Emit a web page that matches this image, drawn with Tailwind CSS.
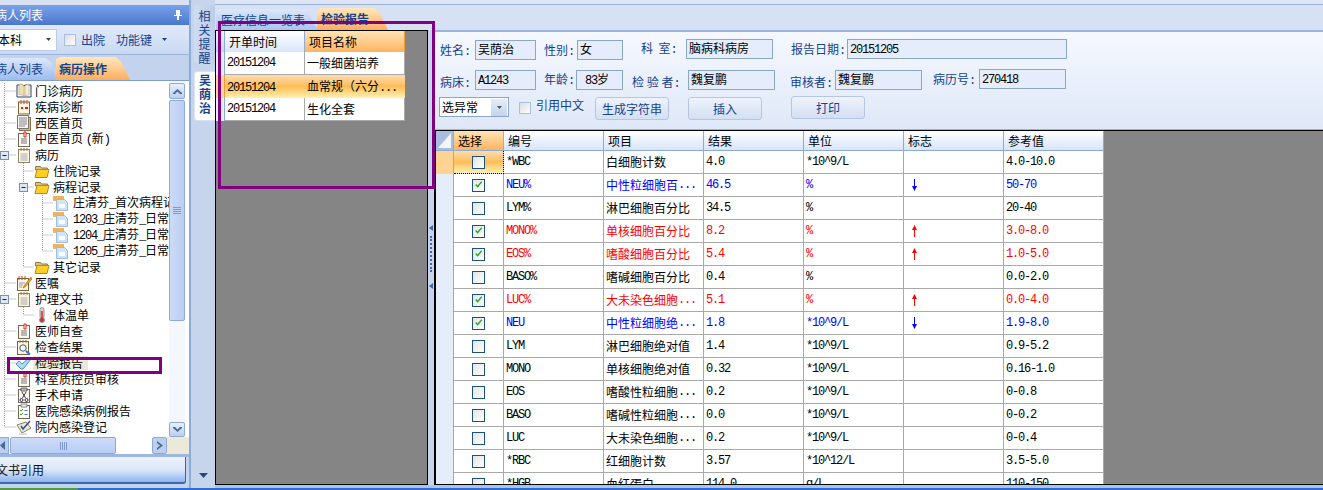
<!DOCTYPE html>
<html lang="zh-CN">
  <head>
    <meta charset="UTF-8" />
    <title>检验报告</title>
    <script src="https://cdn.jsdelivr.net/npm/@tailwindcss/browser@4"></script>
  </head>
  <body class="relative w-[1323px] h-[490px] overflow-hidden bg-[#c3d3ee] text-[12px] leading-[14px] text-black font-['Noto_Sans_CJK_SC',sans-serif]">
    <!-- shared icons -->
    <svg class="hidden">
      <symbol id="i-book" viewBox="0 0 16 16"><path d="M1 2h6l1 1 1-1h6v12H1z" fill="#fff" stroke="#27406f"/><path d="M3 1c3 0 4 1 5 2v10c-1-1-3-1.500-5-1.500z" fill="#efe1b4" stroke="#b79c62" stroke-width=".6"/><path d="M9 3c1-1 3-2 4-2v11c-2 0-3 .5-4 1z" fill="#f6f0d8" stroke="#b79c62" stroke-width=".6"/></symbol>
      <symbol id="i-cal" viewBox="0 0 16 16"><rect x="2.500" y="3" width="11" height="12" fill="#fbf6e6" stroke="#7a6235"/><path d="M5 1v4M8 1v4M11 1v4" stroke="#c2412c"/><path d="M5 9h2M9 9h3" stroke="#e11" stroke-width="2"/></symbol>
      <symbol id="i-doc" viewBox="0 0 16 16"><rect x="3.500" y="2.500" width="11" height="13" fill="#e4b95e" stroke="#8d7038"/><rect x="1.500" y="0.500" width="11" height="13" fill="#f3f3f3" stroke="#777"/><path d="M3 3h8M3 5h8M3 7h8M3 9h8M3 11h6" stroke="#888"/></symbol>
      <symbol id="i-clip" viewBox="0 0 16 16"><rect x="2.500" y="2.500" width="11" height="13" fill="#fdfbf2" stroke="#6f6a55"/><path d="M5 8h6M5 10h6M5 12h6" stroke="#777"/><path d="M8 1v5h2V1z" fill="#fff" stroke="#d22"/></symbol>
      <symbol id="i-note" viewBox="0 0 16 16"><rect x="2.500" y="2.500" width="11" height="13" fill="#fbf6e6" stroke="#8e8468"/><path d="M5 1v3M8 1v3M11 1v3" stroke="#a0763a"/><path d="M4.500 7h7M4.500 9h7M4.500 11h7M4.500 13h7" stroke="#aaa"/></symbol>
      <symbol id="i-folder" viewBox="0 0 16 16"><path d="M1.500 3.500h5l1 1.500h6v2h-12z" fill="#d9c48b" stroke="#8e7a45"/><path d="M1 14.500l2-8h12l-2 8z" fill="#ffcf26" stroke="#b08a1d"/></symbol>
      <symbol id="i-file" viewBox="0 0 16 16"><rect x="0" y="1" width="11" height="5" fill="#eeb35c"/><path d="M3.500 4.500h8l3 3v8h-11z" fill="#cfe4f7" stroke="#9dbbd6"/><path d="M6 9h6v4H6z" fill="#f5fbff"/></symbol>
      <symbol id="i-pen" viewBox="0 0 16 16"><rect x="1.500" y="3.500" width="11" height="12" fill="#fbf6e6" stroke="#7a6235"/><path d="M3 1v4M6 1v4M9 1v4" stroke="#b8452a"/><path d="M3 8h6M3 10h4M3 12h3" stroke="#999"/><path d="M15 2L8 11l-1 2 2-1 7-8z" fill="#f2a81d" stroke="#a2551a" stroke-width=".6"/></symbol>
      <symbol id="i-thermo" viewBox="0 0 16 16"><rect x="6" y="0.500" width="4" height="11" rx="2" fill="#f0c8c0" stroke="#8b99a8"/><circle cx="8" cy="13" r="2.500" fill="#c33" stroke="#8b99a8"/><path d="M8 4v8" stroke="#c33" stroke-width="1.500"/></symbol>
      <symbol id="i-lens" viewBox="0 0 16 16"><rect x="1.500" y="2.500" width="11" height="13" fill="#fbf6e6" stroke="#7a6235"/><path d="M4 1v3M7 1v3M10 1v3" stroke="#a0763a"/><circle cx="7" cy="9" r="3.200" fill="#dff" stroke="#556"/><path d="M10 12l4 3.500" stroke="#2b76c9" stroke-width="2"/></symbol>
      <symbol id="i-tick" viewBox="0 0 16 16"><path d="M0 9l3-3 3 3 8-7 2 1-9 11H5z" fill="#a9dcf5" stroke="#2f78b5" stroke-width=".8"/></symbol>
      <symbol id="i-sciss" viewBox="0 0 16 16"><rect x="2.500" y="2.500" width="11" height="13" fill="#fdfbf2" stroke="#6f6a55"/><path d="M5 1h6v3H5z" fill="#bbb" stroke="#666"/><path d="M6 5l3.500 6M10 5l-3.500 6" stroke="#444"/><circle cx="5.500" cy="13" r="1.500" fill="none" stroke="#23235a"/><circle cx="10.500" cy="13" r="1.500" fill="none" stroke="#23235a"/></symbol>
      <symbol id="i-list" viewBox="0 0 16 16"><rect x="2.500" y="2.500" width="11" height="13" fill="#fdfbf2" stroke="#6f6a55"/><path d="M5 1h6v3H5z" fill="#eee" stroke="#888"/><path d="M4 7l1 1 2-2M4 11l1 1 2-2" fill="none" stroke="#2a9a3c"/><path d="M8.500 7.500h3M8.500 11.500h3" stroke="#4a7ec2"/></symbol>
      <symbol id="i-reg" viewBox="0 0 16 16"><path d="M1 6l9-3 5 6-9 5z" fill="#efe8cf" stroke="#8b8157"/><path d="M3 14h8v2H3z" fill="#ddd"/><path d="M5 7l2 3 7-8" fill="none" stroke="#2450ab" stroke-width="1.500"/></symbol>
      <symbol id="i-check" viewBox="0 0 12 12"><path d="M2.500 6l2.500 3 5-6-1-1-4 4.500-1.500-1.500z" fill="#21a52e"/></symbol>
    </svg>

    <div class="flex h-[488px]">
      <!-- left panel -->
      <aside class="w-[191px] shrink-0 flex flex-col bg-[#c3d3ee] border-r-2 border-[#8eaad6]">
        <div class="h-[5px] bg-[#d8e2f2]"></div>
        <div class="h-[20px] flex items-center justify-between pr-[7px] bg-gradient-to-b from-[#7aa2ec] to-[#4a78cd] text-white overflow-hidden">
          <span class="ml-[-5px] whitespace-nowrap">病人列表</span>
          <svg width="8" height="10" viewBox="0 0 8 10"><path d="M2 0h4v5h2v1H5v4H3V6H0V5h2z" fill="#fff"/></svg>
        </div>
        <div class="h-[30px] flex items-center bg-gradient-to-b from-[#e1eafa] to-[#c9d9f2] border-b border-[#9db4d8] text-[#15428b]">
          <div class="w-[57px] h-[22px] bg-white border-y border-r border-[#b9cbe6] flex items-center justify-between pr-[5px] text-black overflow-hidden">
            <span class="ml-[-2px]">本科</span>
            <svg width="5" height="3"><path d="M0 0h5L2.500 3z" fill="#444"/></svg>
          </div>
          <span class="ml-[7px] w-[12px] h-[12px] border border-[#a9bfe0] bg-gradient-to-br from-[#ddd] to-white"></span>
          <span class="ml-[5px]">出院</span>
          <span class="ml-[11px]">功能键</span>
          <svg class="ml-[10px]" width="5" height="3"><path d="M0 0h5L2.500 3z" fill="#15428b"/></svg>
        </div>
        <div class="h-[26px] flex items-end border-b border-[#7f9dcc]">
          <div class="w-[57px] h-[22px] flex items-center overflow-hidden bg-gradient-to-b from-[#dce7fa] to-[#9dbcef] text-[#15428b] [clip-path:polygon(0_0,80%_0,90%_20%,100%_100%,0_100%)]">
            <span class="ml-[-5px] whitespace-nowrap">病人列表</span>
          </div>
          <div class="w-[74px] h-[23px] ml-[-1px] flex items-center pl-[3px] bg-gradient-to-b from-[#ffe7bd] to-[#ffad5c] font-bold text-[#15428b] [clip-path:polygon(0_10%,5%_0,80%_0,88%_20%,100%_100%,0_100%)]">病历操作</div>
        </div>
        <div class="flex h-[356px] bg-white">
          <div id="tree" class="w-[169px] overflow-hidden pt-[2px] whitespace-nowrap"></div>
          <div class="w-[16px] flex flex-col bg-[#f4f7fd]">
            <div class="h-[16px] mt-[2px] flex items-center justify-center bg-gradient-to-b from-[#e8effc] to-[#bccff0] border border-[#8eaad6] rounded-[2px]"><svg width="9" height="5"><path d="M0 4l4.500-4L9 4 9 5H7L4.500 2.500 2 5H0z" fill="#4b6a9c"/></svg></div>
            <div class="h-[221px] mt-[1px] flex flex-col items-center justify-center gap-px bg-gradient-to-r from-[#cddbf8] to-[#b9cdf6] border border-[#8eaad6] rounded-[2px]">
              <i class="block w-[8px] h-px bg-[#7e9ad0]"></i><i class="block w-[8px] h-px bg-[#7e9ad0]"></i><i class="block w-[8px] h-px bg-[#7e9ad0]"></i><i class="block w-[8px] h-px bg-[#7e9ad0]"></i>
            </div>
            <div class="flex-1"></div>
            <div class="h-[15px] flex items-center justify-center bg-gradient-to-b from-[#e8effc] to-[#bccff0] border border-[#8eaad6] rounded-[2px]"><svg width="9" height="5"><path d="M0 1l4.500 4L9 1 9 0H7L4.500 2.500 2 0H0z" fill="#4b6a9c"/></svg></div>
          </div>
        </div>
        <div class="h-[17px] flex bg-white">
          <div class="w-[9px] flex items-center bg-[#bccff0] border-y border-r border-[#8eaad6]"><svg width="5" height="9"><path d="M5 0L0 4.500 5 9z" fill="#4b6a9c"/></svg></div>
          <div class="w-[106px] ml-px flex items-center justify-center gap-px bg-gradient-to-b from-[#cddbf8] to-[#b9cdf6] border border-[#8eaad6] rounded-[2px]">
            <i class="block w-px h-[8px] bg-[#7e9ad0]"></i><i class="block w-px h-[8px] bg-[#7e9ad0]"></i><i class="block w-px h-[8px] bg-[#7e9ad0]"></i><i class="block w-px h-[8px] bg-[#7e9ad0]"></i>
          </div>
          <div class="w-[36px]"></div>
          <div class="w-[15px] flex items-center justify-center bg-[#bccff0] border border-[#8eaad6] rounded-[2px]"><svg width="6" height="9"><path d="M0 0l6 4.500L0 9V7l3-2.500L0 2z" fill="#4b6a9c"/></svg></div>
          <div class="flex-1 bg-[#ece9d8]"></div>
        </div>
        <div class="h-[3px] bg-[#9db7e0]"></div>
        <div class="h-[27px] w-[186px] flex items-center overflow-hidden rounded-br-[3px] border-r border-b-2 border-[#3b66ad] bg-gradient-to-b from-[#eef3fc] via-[#dbe7f9] to-[#8eb4ee]">
          <span class="ml-[-4px] whitespace-nowrap text-[#111]">文书引用</span>
        </div>
      </aside>

      <!-- vertical tabs -->
      <div class="w-[24px] shrink-0 flex flex-col items-end pt-[5px] bg-[#c6d5ec] text-[#15428b]">
        <div class="w-[21px] h-[58px] pt-[4px] flex flex-col items-center rounded-l-[3px] bg-gradient-to-r from-[#cfdcf2] to-[#bccdea]">
          <span>相</span><span>关</span><span>提</span><span>醒</span>
        </div>
        <div class="w-[21px] h-[50px] mt-[8px] pt-[1px] flex flex-col items-center rounded-l-[3px] border-y border-l border-[#d8e2f2] bg-white font-bold">
          <span>吴</span><span>荫</span><span>治</span>
        </div>
        <div class="flex-1 w-full flex items-end justify-center pb-[10px]">
          <svg width="9" height="5"><path d="M0 0h9L4.500 5z" fill="#2c4a78"/></svg>
        </div>
      </div>

      <!-- right side -->
      <div class="flex-1 flex flex-col min-w-0 h-[488px] bg-[#dde5f4]">
        <div class="h-[26px] flex items-end pl-px pt-[4px] bg-[#d6e1f4] border-t border-[#9db4d8] mt-[4px]">
          <div class="w-[102px] h-[21px] pl-[5px] flex items-center overflow-hidden bg-gradient-to-b from-[#dce7fa] to-[#a8c4f0] text-[#15428b] [clip-path:polygon(0_10%,4%_0,88%_0,100%_100%,0_100%)]">医疗信息一览表</div>
          <div class="w-[71px] h-[22px] ml-[-1px] pl-[4px] flex items-center bg-gradient-to-b from-[#ffe7bd] to-[#ffad5c] font-bold text-[#15428b] [clip-path:polygon(0_10%,5%_0,80%_0,88%_20%,100%_100%,0_100%)]">检验报告</div>
        </div>
        <div class="flex-1 flex min-h-0">
          <!-- order list -->
          <div class="w-[213px] shrink-0 bg-[#868586] border border-black self-stretch overflow-hidden">
            <div class="flex h-[21px]">
              <div class="w-[9px] bg-gradient-to-b from-[#eef3fc] to-[#c3d3ee] border-r border-[#8eaad6]"></div>
              <div class="w-[80px] flex items-center pl-[4px] bg-gradient-to-b from-white to-[#d8e5fa] border-r border-[#8eaad6]">开单时间</div>
              <div class="w-[100px] flex items-center pl-[4px] bg-gradient-to-b from-[#ffe3b4] to-[#fdb45f] border-r border-[#f59c3b]">项目名称</div>
            </div>
            <div class="flex h-[23px]">
              <div class="w-[9px] bg-[#e6edfa] border-r border-[#8eaad6]"></div>
              <div class="w-[80px] flex items-center pl-[2px] bg-white border-r border-b border-[#a9a9a9]">20151204</div>
              <div class="w-[100px] flex items-center pl-[2px] bg-white border-r border-b border-[#a9a9a9]">一般细菌培养</div>
            </div>
            <div class="flex h-[23px]">
              <div class="w-[9px] bg-[#ffd391] border-r border-[#f59c3b]"></div>
              <div class="w-[180px] flex items-center pl-[2px] bg-gradient-to-b from-[#fddcae] via-[#fdbd55] to-[#fff2b0]"><span class="w-[79px]">20151204</span><span class="ml-px">血常规（六分...</span></div>
            </div>
            <div class="flex h-[23px]">
              <div class="w-[9px] bg-[#e6edfa] border-r border-[#8eaad6]"></div>
              <div class="w-[80px] flex items-center pl-[2px] bg-white border-r border-b border-[#a9a9a9]">20151204</div>
              <div class="w-[100px] flex items-center pl-[2px] bg-white border-r border-b border-[#a9a9a9]">生化全套</div>
            </div>
          </div>

          <!-- splitter -->
          <div class="w-[7px] shrink-0 flex flex-col items-center pt-[195px] bg-[#c6d5ec] border-r border-black">
            <svg width="4" height="6"><path d="M4 0L0 3l4 3z" fill="#3f66a8"/></svg>
            <div class="mt-[5px] h-[36px] w-[2px] border-l-2 border-dotted border-[#3f66a8]"></div>
            <svg class="mt-[11px]" width="4" height="6"><path d="M4 0L0 3l4 3z" fill="#3f66a8"/></svg>
          </div>

          <!-- report -->
          <div class="flex-1 min-w-0 flex flex-col">
            <form class="h-[100px] shrink-0 pl-[5px] border-t-2 border-b border-[#9db4d8] bg-gradient-to-b from-[#f5f8fe] to-[#dfe8f8] text-[#15428b]">
              <div class="flex items-start h-[32px] pt-[8px]">
                <span class="mt-[3px] w-[35px]">姓名:</span>
                <span class="w-[61px] h-[20px] pl-[2px] pt-px border border-[#8ba6c8] bg-[#e5edfc] text-black">吴荫治</span>
                <span class="mt-[3px] ml-[8px] w-[33px]">性别:</span>
                <span class="w-[46px] h-[20px] pl-[2px] pt-px border border-[#8ba6c8] bg-[#e5edfc] text-black">女</span>
                <span class="mt-[1px] ml-[18px] w-[45px] whitespace-pre">科  室:</span>
                <span class="w-[87px] h-[20px] pl-[2px] pt-px mt-[-1px] border border-[#8ba6c8] bg-[#e5edfc] text-black">脑病科病房</span>
                <span class="mt-[2px] ml-[18px] w-[56px]">报告日期:</span>
                <span class="w-[220px] h-[20px] pl-[2px] pt-px mt-[-1px] border border-[#8ba6c8] bg-[#e5edfc] text-black">20151205</span>
              </div>
              <div class="flex items-start h-[32px] pt-[6px]">
                <span class="mt-[5px] w-[35px]">病床:</span>
                <span class="w-[61px] h-[20px] pl-[2px] pt-px border border-[#8ba6c8] bg-[#e5edfc] text-black">A1243</span>
                <span class="mt-[2px] ml-[8px] w-[32px]">年龄:</span>
                <span class="w-[47px] h-[20px] pl-[8px] pt-px border border-[#8ba6c8] bg-[#e5edfc] text-black">83岁</span>
                <span class="mt-[5px] ml-[9px] w-[56px] whitespace-pre">检 验 者:</span>
                <span class="w-[87px] h-[20px] pl-[2px] pt-px border border-[#8ba6c8] bg-[#e5edfc] text-black">魏复鹏</span>
                <span class="mt-[5px] ml-[15px] w-[45px]">审核者:</span>
                <span class="w-[87px] h-[20px] pl-[2px] pt-px border border-[#8ba6c8] bg-[#e5edfc] text-black">魏复鹏</span>
                <span class="mt-[2px] ml-[11px] w-[46px]">病历号:</span>
                <span class="w-[87px] h-[20px] pl-[2px] pt-px mt-[-1px] border border-[#8ba6c8] bg-[#e5edfc] text-black">270418</span>
              </div>
              <div class="flex items-start pt-[1px]">
                <div class="w-[70px] h-[20px] ml-[-1px] flex items-center justify-between border border-[#8ba6c8] bg-white text-black">
                  <span class="pl-[2px]">选异常</span>
                  <span class="w-[16px] h-[17px] mr-px flex items-center justify-center bg-gradient-to-b from-[#e5edfc] to-[#c3d3ee]"><svg width="5" height="3"><path d="M0 0h5L2.500 3z" fill="#555"/></svg></span>
                </div>
                <span class="ml-[10px] mt-[5px] w-[12px] h-[12px] border border-[#a9bfe0] bg-gradient-to-br from-[#ddd] to-white"></span>
                <span class="ml-[5px] mt-[1px] w-[59px]">引用中文</span>
                <span class="w-[74px] h-[23px] flex items-center justify-center rounded-[3px] border border-[#b4c6e2] bg-gradient-to-b from-[#eef3fc] to-[#d3dff3]">生成字符串</span>
                <span class="ml-[19px] w-[74px] h-[23px] flex items-center justify-center rounded-[3px] border border-[#b4c6e2] bg-gradient-to-b from-[#eef3fc] to-[#d3dff3]">插入</span>
                <span class="ml-[29px] mt-[-1px] w-[74px] h-[23px] flex items-center justify-center rounded-[3px] border border-[#b4c6e2] bg-gradient-to-b from-[#eef3fc] to-[#d3dff3]">打印</span>
              </div>
            </form>
            <div class="flex-1 min-h-0 bg-[#868586] border-t border-black border-l border-b overflow-hidden">
              <div class="flex h-[20px] w-[668px] border-b border-[#8eaad6]">
                <div class="w-[18px] flex items-end bg-[#a9bddf] border-r border-[#8eaad6] p-[2px]"><svg width="13" height="15"><path d="M13 0v15H0z" fill="#f2f5fb"/></svg></div>
                <div class="w-[50px] flex items-center pl-[4px] bg-gradient-to-b from-[#ffe3b4] to-[#fdb45f] border-r border-[#f59c3b]">选择</div>
                <div class="w-[100px] flex items-center pl-[4px] bg-gradient-to-b from-white to-[#d8e5fa] border-r border-[#8eaad6]">编号</div>
                <div class="w-[100px] flex items-center pl-[4px] bg-gradient-to-b from-white to-[#d8e5fa] border-r border-[#8eaad6]">项目</div>
                <div class="w-[100px] flex items-center pl-[4px] bg-gradient-to-b from-white to-[#d8e5fa] border-r border-[#8eaad6]">结果</div>
                <div class="w-[100px] flex items-center pl-[4px] bg-gradient-to-b from-white to-[#d8e5fa] border-r border-[#8eaad6]">单位</div>
                <div class="w-[100px] flex items-center pl-[4px] bg-gradient-to-b from-white to-[#d8e5fa] border-r border-[#8eaad6]">标志</div>
                <div class="w-[100px] flex items-center pl-[4px] bg-gradient-to-b from-white to-[#d8e5fa] border-r border-[#8eaad6]">参考值</div>
              </div>
              <div id="rows"></div>
            </div>
          </div>
        </div>
        <div class="h-[3px] shrink-0 bg-[#a9c4ee]"></div>
      </div>
    </div>
    <div class="flex h-[2px]">
      <div class="w-[78px] bg-[#4aa03c]"></div>
      <div class="flex-1 bg-[#2a6fd6]"></div>
    </div>

    <!-- purple annotation boxes drawn over the screenshot -->
    <div class="absolute left-[218px] top-[21px] w-[217px] h-[168px] border-[3px] border-[#800080]"></div>
    <div class="absolute left-[7px] top-[357px] w-[155px] h-[17px] border-[3px] border-[#800080]"></div>

    <script>
      // [level, icon, text, expand box, selected]
      const tree = [
        [0, "i-book", "门诊病历"],
        [0, "i-cal", "疾病诊断"],
        [0, "i-doc", "西医首页"],
        [0, "i-clip", "中医首页 (新)"],
        [0, "i-note", "病历", true],
        [1, "i-folder", "住院记录"],
        [1, "i-folder", "病程记录", true],
        [2, "i-file", "庄清芬_首次病程记录"],
        [2, "i-file", "1203_庄清芬_日常病程"],
        [2, "i-file", "1204_庄清芬_日常病程"],
        [2, "i-file", "1205_庄清芬_日常病程"],
        [1, "i-folder", "其它记录"],
        [0, "i-pen", "医嘱"],
        [0, "i-note", "护理文书", true],
        [1, "i-thermo", "体温单"],
        [0, "i-clip", "医师自查"],
        [0, "i-lens", "检查结果"],
        [0, "i-tick", "检验报告", false, true],
        [0, "i-clip", "科室质控员审核"],
        [0, "i-sciss", "手术申请"],
        [0, "i-list", "医院感染病例报告"],
        [0, "i-reg", "院内感染登记"],
      ];
      const xs = [4.5, 23.5, 42.5];
      document.getElementById("tree").innerHTML = tree.map(([lv, icon, text, box, sel], i) => {
        const w = [16, 34, 53][lv];
        let lines = `<path d="M${xs[lv]} 8H${w}" stroke="#999" stroke-dasharray="1 1"/>`;
        // vertical guides of the ancestors and of the node itself
        for (let l = 0; l <= lv; l++) {
          const last = tree.slice(i + 1).findIndex((n) => n[0] <= l);
          const hasSibling = last >= 0 && tree[i + 1 + last][0] === l;
          const end = l === lv && !hasSibling ? 8 : 16;
          if (l < lv && !hasSibling) continue;
          lines += `<path d="M${xs[l]} 0V${end}" stroke="#999" stroke-dasharray="1 1"/>`;
        }
        if (box) {
          const bx = xs[lv] - 4;
          lines += `<rect x="${bx}" y="4.500" width="8" height="8" fill="#dde7f5" stroke="#7a8fa8"/><path d="M${bx + 2} 8.500h4" stroke="#222"/>`;
        }
        return `<div class="flex h-[16px] items-center">
          <svg class="shrink-0" width="${w}" height="16">${lines}</svg>
          <svg class="shrink-0" width="16" height="16"><use href="#${icon}"/></svg>
          <span class="${sel ? "ml-[1px] pl-[2px] pr-[5px] bg-[#ece9d8]" : "ml-[3px]"} ${lv === 2 ? "ml-[4px]" : ""}">${text}</span>
        </div>`;
      }).join("");

      // [checked, colour, code, item, result, unit, flag, reference]
      const rows = [
        [0, "k", "*WBC", "白细胞计数", "4.0", "*10^9/L", "", "4.0-10.0"],
        [1, "b", "NEU%", "中性粒细胞百...", "46.5", "%", "d", "50-70"],
        [0, "k", "LYM%", "淋巴细胞百分比", "34.5", "%", "", "20-40"],
        [1, "r", "MONO%", "单核细胞百分比", "8.2", "%", "u", "3.0-8.0"],
        [1, "r", "EOS%", "嗜酸细胞百分比", "5.4", "%", "u", "1.0-5.0"],
        [0, "k", "BASO%", "嗜碱细胞百分比", "0.4", "%", "", "0.0-2.0"],
        [1, "r", "LUC%", "大未染色细胞...", "5.1", "%", "u", "0.0-4.0"],
        [1, "b", "NEU", "中性粒细胞绝...", "1.8", "*10^9/L", "d", "1.9-8.0"],
        [0, "k", "LYM", "淋巴细胞绝对值", "1.4", "*10^9/L", "", "0.9-5.2"],
        [0, "k", "MONO", "单核细胞绝对值", "0.32", "*10^9/L", "", "0.16-1.0"],
        [0, "k", "EOS", "嗜酸性粒细胞...", "0.2", "*10^9/L", "", "0-0.8"],
        [0, "k", "BASO", "嗜碱性粒细胞...", "0.0", "*10^9/L", "", "0-0.2"],
        [0, "k", "LUC", "大未染色细胞...", "0.2", "*10^9/L", "", "0-0.4"],
        [0, "k", "*RBC", "红细胞计数", "3.57", "*10^12/L", "", "3.5-5.0"],
        [0, "k", "*HGB", "血红蛋白", "114.0", "g/L", "", "110-150"],
      ];
      const colour = { k: "text-black", b: "text-[#0000ff]", r: "text-[#ff0000]" };
      const cell = "w-[100px] flex items-center pl-[2px] border-r border-b border-[#a9a9a9] whitespace-nowrap overflow-hidden";
      const arrows = {
        u: '<svg class="ml-[6px]" width="5" height="12"><path d="M2.500 0L5 5H3v7H2V5H0z" fill="#ff0000"/></svg>',
        d: '<svg class="ml-[6px]" width="5" height="12"><path d="M2.500 12L5 7H3V0H2v7H0z" fill="#0000ff"/></svg>',
        "": "",
      };
      document.getElementById("rows").innerHTML = rows.map(([on, c, code, item, res, unit, flag, ref], i) => {
        const first = i === 0;
        return `<div class="flex h-[23px] w-[668px] bg-white ${colour[c]}">
          <div class="w-[18px] border-r ${first ? "bg-[#ffd391] border-[#f59c3b]" : "bg-[#e6edfa] border-[#8eaad6]"}"></div>
          <div class="w-[50px] flex items-center justify-center border-r border-b ${first ? "border-dotted border-black bg-gradient-to-b from-[#fddcae] via-[#fdbd55] to-[#fff2b0]" : "border-[#a9a9a9]"}">
            <span class="w-[13px] h-[13px] flex items-center justify-center border border-[#1c5180] bg-gradient-to-br from-[#e4e4e0] to-white">${on ? '<svg width="12" height="12"><use href="#i-check"/></svg>' : ""}</span>
          </div>
          <div class="${cell}">${code}</div>
          <div class="${cell}">${item}</div>
          <div class="${cell}">${res}</div>
          <div class="${cell}">${unit}</div>
          <div class="${cell}">${arrows[flag]}</div>
          <div class="${cell}">${ref}</div>
        </div>`;
      }).join("");

      // latin runs are half-width like the CJK font of the original
      const walker = document.createTreeWalker(document.body, NodeFilter.SHOW_TEXT, {
        acceptNode: (n) =>
          n.parentElement.closest("script,svg") || !/[!-~]/.test(n.nodeValue) ? NodeFilter.FILTER_REJECT : NodeFilter.FILTER_ACCEPT,
      });
      const nodes = [];
      while (walker.nextNode()) nodes.push(walker.currentNode);
      nodes.forEach((n) => {
        const box = document.createElement("span");
        box.innerHTML = n.nodeValue.replace(/[!-~]+/g, (m) => `<span class="font-['Liberation_Mono',monospace] text-[12px] tracking-[-1.2px]">${m}</span>`);
        n.replaceWith(...box.childNodes);
      });
    </script>
  </body>
</html>
